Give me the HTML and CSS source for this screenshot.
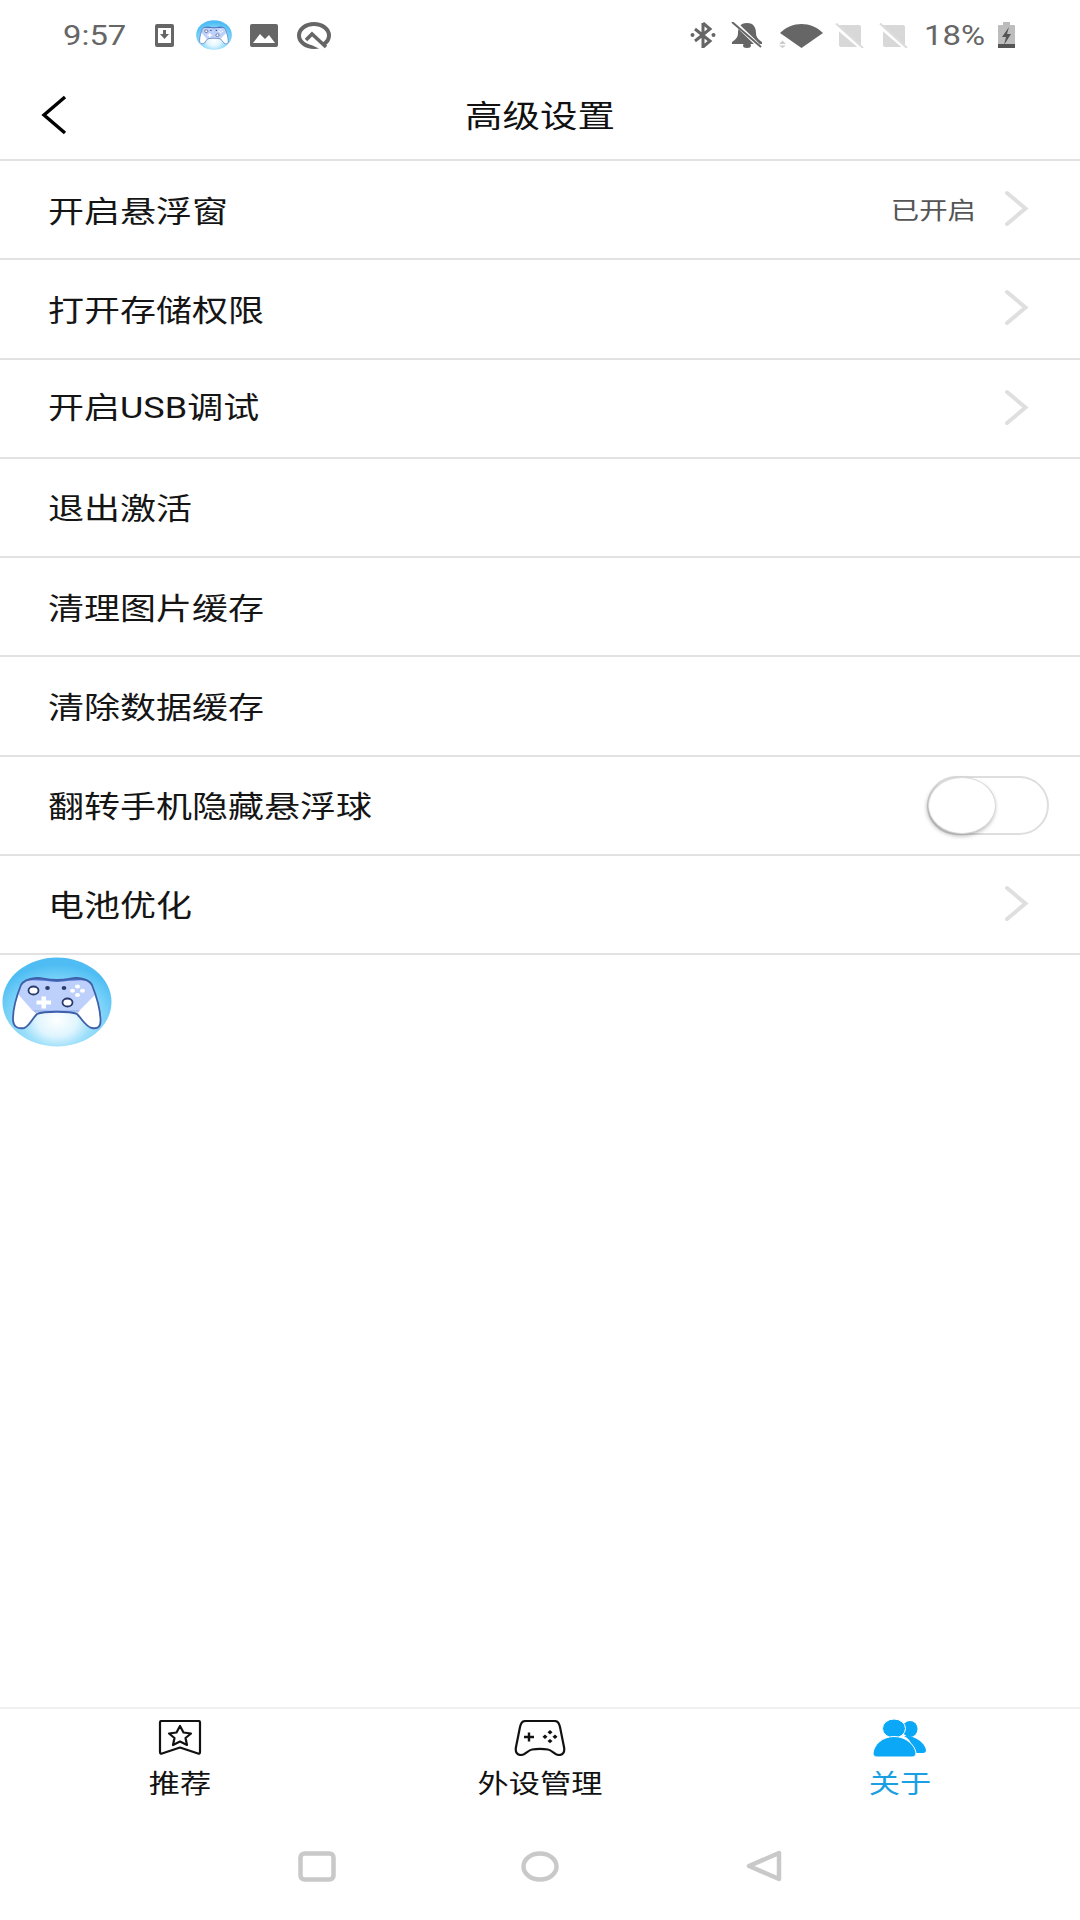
FILE: index.html
```html
<!DOCTYPE html>
<html lang="zh">
<head>
<meta charset="utf-8">
<title>高级设置</title>
<link rel="stylesheet" href="styles.css">
</head>
<body>
<svg class="defs" width="0" height="0" aria-hidden="true">
  <defs>
    <radialGradient id="ballGrad" cx="0.5" cy="0.7" r="0.62">
      <stop offset="0" stop-color="#ffffff"/>
      <stop offset="0.3" stop-color="#dff5fe"/>
      <stop offset="0.5" stop-color="#9fe0fb"/>
      <stop offset="0.8" stop-color="#6fcdf7"/>
      <stop offset="1" stop-color="#4fbdf3"/>
    </radialGradient>
    <clipPath id="padClip">
      <path d="M34 21C25 22 21 24 19 28C15 38 11 52 11 62C11 70 16 72 22 71C27 70 30 62 35 57C42 54 68 54 75 57C80 62 84 70 90 71C96 72 99 70 98.500 62C98 52 94 38 90 28C88 24 84 22 76 21C70 20 68 23 55 23C42 23 40 20 34 21Z"/>
    </clipPath>
    <symbol id="ball" viewBox="0 0 110 90" preserveAspectRatio="none">
      <ellipse cx="55" cy="45" rx="54.500" ry="44.500" fill="url(#ballGrad)"/>
      <path d="M34 21C25 22 21 24 19 28C15 38 11 52 11 62C11 70 16 72 22 71C27 70 30 62 35 57C42 54 68 54 75 57C80 62 84 70 90 71C96 72 99 70 98.500 62C98 52 94 38 90 28C88 24 84 22 76 21C70 20 68 23 55 23C42 23 40 20 34 21Z" fill="#fff"/>
      <g clip-path="url(#padClip)">
        <polygon points="0,15 110,15 95,36 78,53 30,53 15,36" fill="#bcd0fb"/>
        <polygon points="30,53 78,53 75,57 35,57" fill="#a5bff3"/>
        <polygon points="22,71 35,55 38,57 30,72" fill="#e4e6ec"/>
        <polygon points="88,71 75,55 72,57 80,72" fill="#e4e6ec"/>
        <path d="M15 27C25 21 40 24 55 25C70 24 85 21 95 27L90 19H20Z" fill="#4a6fc8"/>
      </g>
      <path d="M34 21C25 22 21 24 19 28C15 38 11 52 11 62C11 70 16 72 22 71C27 70 30 62 35 57C42 54 68 54 75 57C80 62 84 70 90 71C96 72 99 70 98.500 62C98 52 94 38 90 28C88 24 84 22 76 21C70 20 68 23 55 23C42 23 40 20 34 21Z" fill="none" stroke="#3e5fa9" stroke-width="1.800"/>
      <ellipse cx="31.500" cy="33.500" rx="5" ry="4" fill="#fff" stroke="#2a3a6c" stroke-width="1.800"/>
      <ellipse cx="65.500" cy="45.500" rx="5" ry="4" fill="#fff" stroke="#2a3a6c" stroke-width="1.800"/>
      <ellipse cx="45.500" cy="31" rx="2.300" ry="1.900" fill="#2a3a6c"/>
      <ellipse cx="62" cy="31" rx="2.300" ry="1.900" fill="#2a3a6c"/>
      <path d="M34.500 43.500h5v-4h4.500v4h5v4h-5v4h-4.500v-4h-5z" fill="#fff"/>
      <g fill="#fff">
        <ellipse cx="75.500" cy="29.500" rx="2.500" ry="2"/>
        <ellipse cx="75.500" cy="38" rx="2.500" ry="2"/>
        <ellipse cx="70.500" cy="33.700" rx="2.500" ry="2"/>
        <ellipse cx="80.500" cy="33.700" rx="2.500" ry="2"/>
      </g>
    </symbol>
    <symbol id="chev" viewBox="0 0 26 38">
      <path d="M3 3L21.500 18.500L3 34" fill="none" stroke="#dfdfdf" stroke-width="4" stroke-linecap="round" stroke-linejoin="miter"/>
    </symbol>
    <symbol id="sim" viewBox="0 0 29 25">
      <path d="M4 2h20a2 2 0 0 1 2 2v20H6a2 2 0 0 1-2-2z" fill="#d8d8d8"/>
      <path d="M0 3L27 26" stroke="#fff" stroke-width="3"/>
      <path d="M1 0.500L28 25" stroke="#dcdcdc" stroke-width="2"/>
    </symbol>
  </defs>
</svg>

<div class="page">
  <header class="top">
    <div class="status">
      <span class="time"><span class="sq">9:57</span></span>
      <svg class="ic-dl" width="19" height="23" viewBox="0 0 19 23"><rect x="0" y="0" width="19" height="23" rx="2" fill="#666"/><rect x="3" y="4" width="13" height="15" fill="#fff"/><path d="M8 6h3v4h3l-4.500 5L5 10h3z" fill="#666"/></svg>
      <svg class="ic-game" width="36" height="30"><use href="#ball"/></svg>
      <svg class="ic-img" width="28" height="23" viewBox="0 0 28 23"><rect width="28" height="23" rx="2" fill="#666"/><path d="M3 19L10 10L15 15L19 11L25 19Z" fill="#fff"/></svg>
      <svg class="ic-q" width="34" height="27" viewBox="0 0 34 27"><ellipse cx="17" cy="13.500" rx="15" ry="11.500" fill="none" stroke="#666" stroke-width="4"/><path d="M13 19L30 27" stroke="#fff" stroke-width="6"/><path d="M9 18L15 12L29 25" fill="none" stroke="#666" stroke-width="3.500"/></svg>
      <span class="grow"></span>
      <svg width="26" height="26" viewBox="0 0 26 26"><path d="M13 1V25L20 19L5 7M13 1L20 7L5 19" fill="none" stroke="#666" stroke-width="3"/><circle cx="2.500" cy="13" r="2" fill="#666"/><circle cx="23.500" cy="13" r="2" fill="#666"/></svg>
      <svg class="ic-bell" width="32" height="26" viewBox="0 0 32 26"><path d="M16 1C9 1 7 6 7 11C7 15 5 17 1 20V22H31V20C27 17 25 15 25 11C25 6 23 1 16 1Z" fill="#666"/><ellipse cx="16" cy="23.500" rx="4" ry="2.500" fill="#666"/><path d="M3 0L30 26" stroke="#fff" stroke-width="4"/><path d="M1 0L30 25" stroke="#666" stroke-width="2"/></svg>
      <svg class="ic-wifi" width="45" height="26" viewBox="0 0 45 26"><path d="M1 11C13 -1 32 -1 44 11L22.500 26Z" fill="#666"/><path d="M0 22L3.500 18.500L7 22Z M0 23.500L3.500 26L7 23.500Z" fill="#ccc"/></svg>
      <svg class="ic-sim1" width="29" height="25"><use href="#sim"/></svg>
      <svg class="ic-sim2" width="29" height="25"><use href="#sim"/></svg>
      <span class="pct"><span class="sq">18%</span></span>
      <svg class="ic-bat" width="17" height="26" viewBox="0 0 17 26"><rect x="5" y="0" width="7" height="3" fill="#bbb"/><rect x="0" y="3" width="17" height="23" rx="1" fill="#bdbdbd"/><rect x="0" y="22" width="17" height="4" fill="#555"/><path d="M11 5L4 15H8L6 23L13 12H9Z" fill="#555"/></svg>
    </div>
    <div class="toolbar">
      <svg class="back" width="26" height="40" viewBox="0 0 26 40"><path d="M24 2L3 20L24 38" fill="none" stroke="#000" stroke-width="3.400"/></svg>
      <h1 class="title"><span class="sq">高级设置</span></h1>
    </div>
  </header>

  <main class="list">
    <div class="row"><span class="label"><span class="sq">开启悬浮窗</span></span><span class="value"><span class="sq">已开启</span></span><svg class="chev" width="26" height="38"><use href="#chev"/></svg></div>
    <div class="row"><span class="label"><span class="sq">打开存储权限</span></span><svg class="chev" width="26" height="38"><use href="#chev"/></svg></div>
    <div class="row"><span class="label"><span class="sq">开启<span class="latin">USB</span>调试</span></span><svg class="chev" width="26" height="38"><use href="#chev"/></svg></div>
    <div class="row"><span class="label"><span class="sq">退出激活</span></span></div>
    <div class="row"><span class="label"><span class="sq">清理图片缓存</span></span></div>
    <div class="row"><span class="label"><span class="sq">清除数据缓存</span></span></div>
    <div class="row"><span class="label"><span class="sq">翻转手机隐藏悬浮球</span></span><span class="switch"><span class="knob"></span></span></div>
    <div class="row"><span class="label"><span class="sq">电池优化</span></span><svg class="chev" width="26" height="38"><use href="#chev"/></svg></div>
  </main>

  <svg class="float-ball" width="110" height="90"><use href="#ball"/></svg>

  <nav class="tabs">
    <div class="tab">
      <svg width="44" height="36" viewBox="0 0 44 36"><path d="M2 2.500C2 1.500 2.500 1 3.500 1H40.500C41.500 1 42 1.500 42 2.500V32C42 33.500 41 34 40 33.500L22 27.500L4 33.500C3 34 2 33.500 2 32Z" fill="none" stroke="#111" stroke-width="2.200" stroke-linejoin="round"/><path d="M22 6L25.500 12.500L33 13.500L27.500 18L29 25L22 21.500L15 25L16.500 18L11 13.500L18.500 12.500Z" fill="none" stroke="#111" stroke-width="2.200" stroke-linejoin="round"/></svg>
      <span class="tab-label"><span class="sq">推荐</span></span>
    </div>
    <div class="tab">
      <svg width="52" height="36" viewBox="0 0 52 36"><path d="M12 1H40C44 1 45 3 46 7L50 27C51 32 49 35 45 35C41 35 38 30 34 29.500C28 28.500 24 28.500 18 29.500C14 30 11 35 7 35C3 35 1 32 2 27L6 7C7 3 8 1 12 1Z" fill="none" stroke="#111" stroke-width="2.200"/><path d="M10 17H20M15 12.500V21.500" stroke="#111" stroke-width="2.400"/><path d="M36 10l2.500 2.200L36 14.400L33.500 12.200ZM36 19l2.500 2L36 23.200L33.500 21ZM31 14.500l2.500 2.200L31 18.900L28.500 16.700ZM41 14.500l2.500 2.200L41 18.900L38.500 16.700Z" fill="#111"/></svg>
      <span class="tab-label"><span class="sq">外设管理</span></span>
    </div>
    <div class="tab active">
      <svg class="people" width="54" height="38" viewBox="0 0 54 38"><ellipse cx="37" cy="10" rx="7.500" ry="8" fill="#0aa8f7"/><path d="M31 17C42 16 52 24 53 31C53 33 52 34 50 34H40C40 26 37 20 31 17Z" fill="#0aa8f7"/><ellipse cx="21" cy="9.500" rx="11.500" ry="9.500" fill="#0aa8f7" stroke="#fff" stroke-width="1"/><path d="M21 17.500C33 17.500 42 26 43 34C43 37 41 38 39 38H4C2 38 0 37 0 34C1 26 9 17.500 21 17.500Z" fill="#0aa8f7" stroke="#fff" stroke-width="1"/></svg>
      <span class="tab-label"><span class="sq">关于</span></span>
    </div>
  </nav>

  <div class="sysnav">
    <svg width="38" height="31" viewBox="0 0 38 31"><rect x="2.500" y="2.500" width="33" height="26" rx="4" fill="none" stroke="#c9c9c9" stroke-width="4.500"/></svg>
    <svg width="38" height="31" viewBox="0 0 38 31"><ellipse cx="19" cy="15.500" rx="16.500" ry="13" fill="none" stroke="#c9c9c9" stroke-width="4.500"/></svg>
    <svg class="nav-back" width="36" height="32" viewBox="0 0 36 32"><path d="M33 3V29L3 16Z" fill="none" stroke="#c9c9c9" stroke-width="4.500" stroke-linejoin="round"/></svg>
  </div>
</div>
</body>
</html>
```

FILE: styles.css
```css
* {
  box-sizing: border-box;
}

html,
body {
  margin: 0;
  padding: 0;
  background: #fff;
}

body {
  font-family: "Noto Sans CJK SC", "Noto Sans", sans-serif;
  color: #111;
}

.defs {
  position: absolute;
}

svg {
  display: block;
  flex: none;
}

.page {
  position: relative;
  display: flex;
  flex-direction: column;
  width: 1080px;
  height: 1920px;
  overflow: hidden;
}

/* The source capture is stretched horizontally; text is squeezed vertically to match. */
.sq {
  display: inline-block;
  transform: scaleY(0.82);
  white-space: nowrap;
}

.latin {
  font-family: Roboto, sans-serif;
}

.top {
  height: 161px;
  border-bottom: 2px solid #e2e2e2;
}

.status {
  display: flex;
  align-items: center;
  height: 70px;
  padding: 0 65px 0 63px;
}

.time,
.pct {
  margin-top: 2px;
  font-family: Roboto, sans-serif;
  font-size: 32.800px;
  line-height: 40px;
  color: #666;
}

.grow {
  flex: 1;
}

.ic-dl { margin-left: 29px; }
.ic-game { margin-left: 22px; }
.ic-img { margin-left: 18px; }
.ic-q { margin-left: 19px; }
.ic-bell { margin-left: 15px; }
.ic-wifi { margin-left: 16px; }
.ic-sim1 { margin-left: 11px; }
.ic-sim2 { margin-left: 15px; }
.pct { margin-left: 16px; }
.ic-bat { margin-left: 13px; }

.toolbar {
  display: flex;
  align-items: center;
  justify-content: center;
  position: relative;
  height: 89px;
}

.back {
  position: absolute;
  left: 41px;
  top: 25px;
}

.title {
  margin: 0 0 2px;
  font-size: 37.500px;
  font-weight: 400;
  line-height: 50px;
  color: #111;
}

.list {
  flex: 1;
}

.row {
  display: flex;
  align-items: center;
  height: 99.250px;
  padding: 0 50px 0 48px;
  border-bottom: 2px solid #e2e2e2;
}

.label {
  flex: 1;
  padding-bottom: 2px;
  font-size: 36px;
  line-height: 50px;
  color: #151515;
}

.value {
  margin-right: 28px;
  padding-bottom: 2px;
  font-size: 28.400px;
  line-height: 40px;
  color: #555;
}

.chev {
  margin-bottom: 1px;
}

.switch {
  position: relative;
  width: 122px;
  height: 59px;
  margin-right: -19px;
  border: 2px solid #dedede;
  border-radius: 30px;
  background: #fff;
}

.knob {
  position: absolute;
  left: -1px;
  top: -1px;
  width: 68px;
  height: 57px;
  border: 1px solid #d8d8d8;
  border-radius: 50%;
  background: #fff;
  box-shadow: -1px 2px 4px rgba(0, 0, 0, 0.3);
}

.float-ball {
  position: absolute;
  left: 2px;
  top: 957px;
}

.tabs {
  display: grid;
  grid-template-columns: repeat(3, 1fr);
  height: 114px;
  padding-top: 11px;
  border-top: 2px solid #efefef;
}

.tab {
  display: flex;
  flex-direction: column;
  align-items: center;
}

.people {
  margin: -1px 0 -1px;
}

.tab-label {
  margin-top: 11px;
  font-size: 31.200px;
  line-height: 30px;
  color: #111;
}

.tab.active .tab-label {
  color: #1aa0e2;
}

.sysnav {
  display: flex;
  justify-content: center;
  column-gap: 185px;
  align-items: center;
  height: 99px;
  padding: 0 0 9px;
}

.nav-back {
  margin-left: 2px;
}
```
